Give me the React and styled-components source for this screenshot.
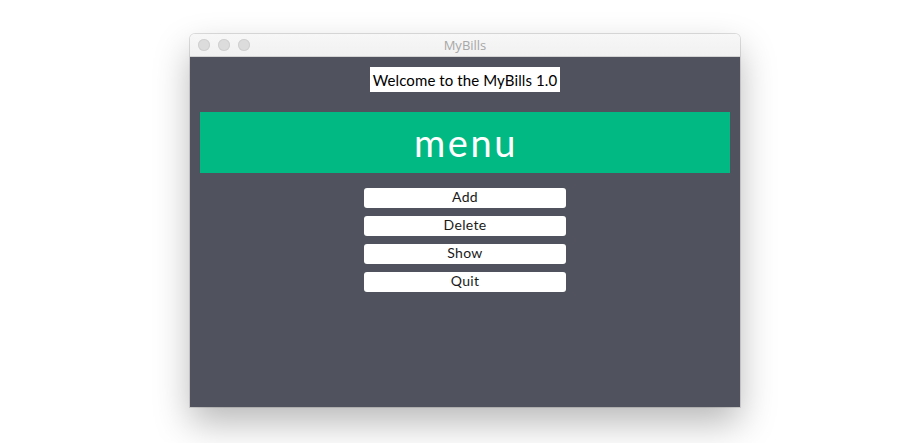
import styled, { createGlobalStyle } from 'styled-components'

const GlobalStyle = createGlobalStyle`
  html, body {
    margin: 0;
    padding: 0;
    background: #ffffff;
  }
  body {
    font-family: Lato, "Open Sans", sans-serif;
  }
`

const Desktop = styled.div`
  width: 901px;
  height: 443px;
  overflow: hidden;
  padding: 34px 0 0 190px;
  box-sizing: border-box;
`

const Window = styled.div`
  width: 550px;
  display: flex;
  flex-direction: column;
  border-radius: 5px 5px 0 0;
  box-shadow: 0 0 0 1px rgba(0, 0, 0, 0.12), 0 16px 36px rgba(0, 0, 0, 0.28);
`

const TitleBar = styled.div`
  position: relative;
  height: 22px;
  background: linear-gradient(#f7f7f7, #f1f1f1);
  border-bottom: 1px solid #d3d3d3;
  border-radius: 5px 5px 0 0;
  display: flex;
  align-items: center;
  justify-content: center;
  font-family: "Open Sans", Roboto, sans-serif;
  font-size: 13px;
  color: #a7a7a7;
`

const Lights = styled.div`
  position: absolute;
  left: 8px;
  top: 5px;
  display: flex;
  gap: 8px;
`

const Light = styled.span`
  width: 12px;
  height: 12px;
  border-radius: 50%;
  background: #dcdcdc;
  box-shadow: inset 0 0 0 1px #d0d0d0;
`

const Content = styled.div`
  height: 350px;
  background: #50525d;
  display: flex;
  flex-direction: column;
  align-items: center;
  padding-top: 10px;
  box-sizing: border-box;
`

const Welcome = styled.div`
  background: #ffffff;
  color: #000000;
  height: 25px;
  padding: 0 3px;
  display: flex;
  align-items: center;
  font-size: 15px;
  letter-spacing: 0.1px;
`

const Banner = styled.div`
  align-self: stretch;
  margin: 20px 10px 0;
  height: 61px;
  background: #00b983;
  color: #ffffff;
  display: flex;
  align-items: center;
  justify-content: center;
  font-size: 38px;
  letter-spacing: 2.6px;
  padding: 0 0 2px 2px;
  box-sizing: border-box;
`

const Buttons = styled.div`
  margin-top: 15px;
  display: flex;
  flex-direction: column;
  gap: 8px;
`

const MenuButton = styled.button`
  width: 202px;
  height: 20px;
  border: none;
  border-radius: 3px;
  background: #ffffff;
  color: #1a1a1a;
  font-family: Lato, "Open Sans", sans-serif;
  font-size: 14px;
  letter-spacing: 0.3px;
  padding: 0 0 3px;
  display: flex;
  align-items: center;
  justify-content: center;
`

export default function App() {
  const items = ['Add', 'Delete', 'Show', 'Quit']

  return (
    <>
      <GlobalStyle />
      <Desktop>
        <Window>
          <TitleBar>
            <Lights>
              <Light />
              <Light />
              <Light />
            </Lights>
            MyBills
          </TitleBar>
          <Content>
            <Welcome>Welcome to the MyBills 1.0</Welcome>
            <Banner>menu</Banner>
            <Buttons>
              {items.map(item => (
                <MenuButton key={item}>{item}</MenuButton>
              ))}
            </Buttons>
          </Content>
        </Window>
      </Desktop>
    </>
  )
}
